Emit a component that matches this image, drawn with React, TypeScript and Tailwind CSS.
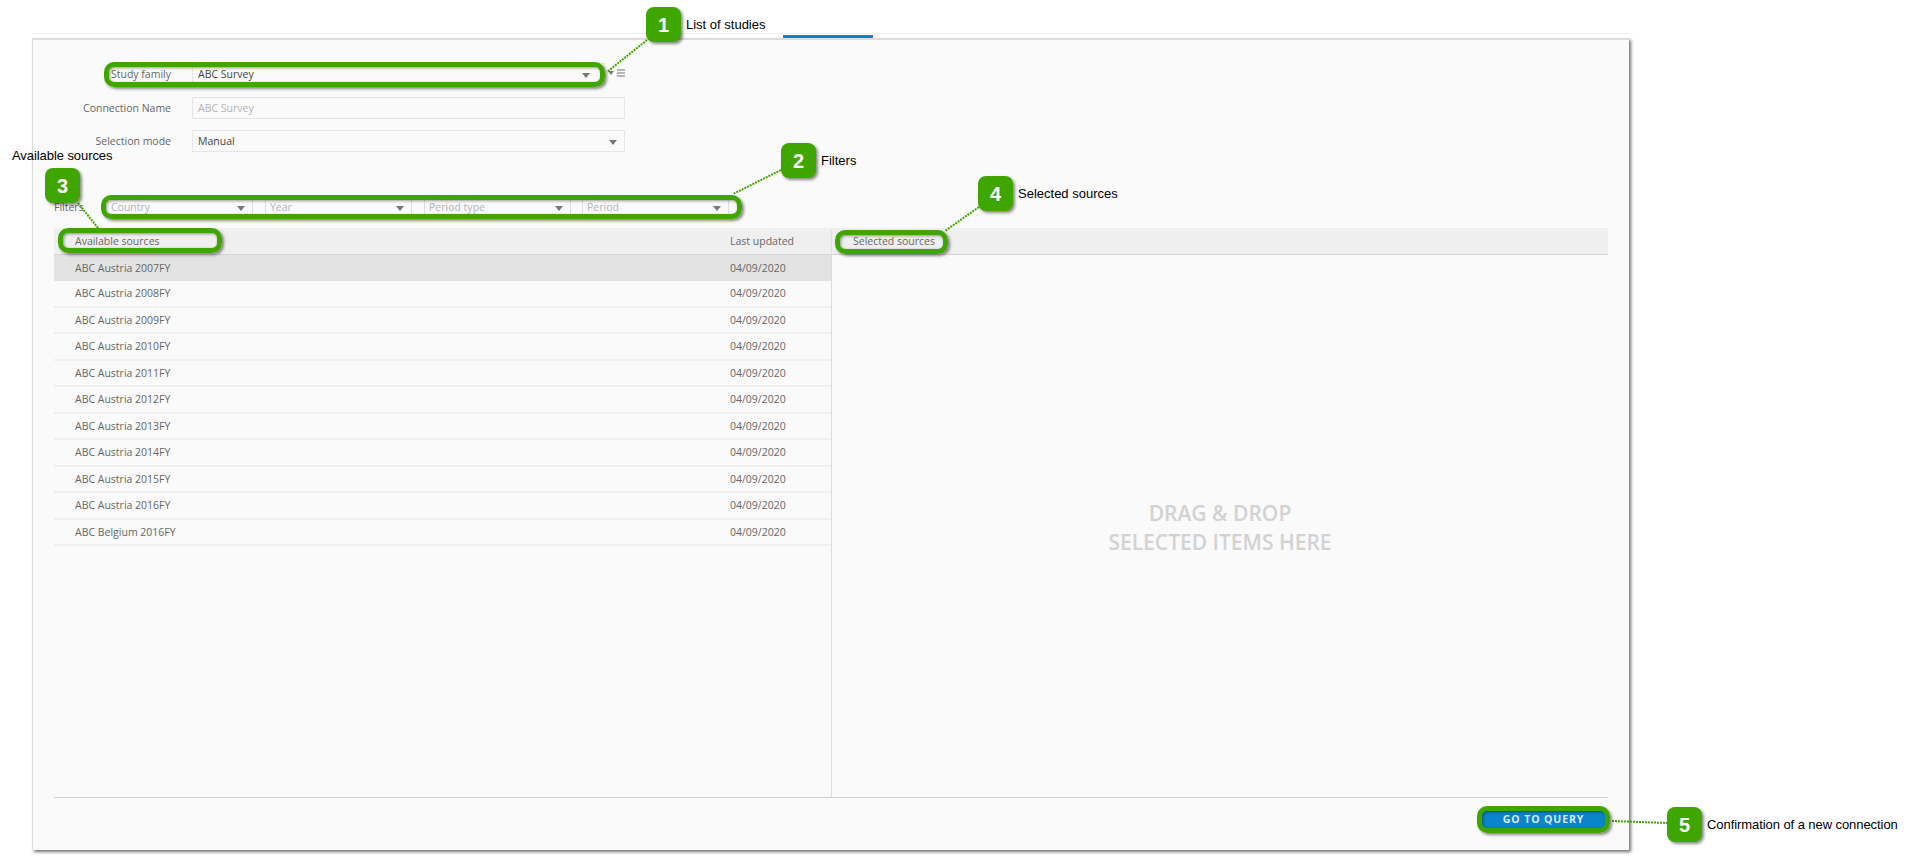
const rows = [
  "ABC Austria 2007FY",
  "ABC Austria 2008FY",
  "ABC Austria 2009FY",
  "ABC Austria 2010FY",
  "ABC Austria 2011FY",
  "ABC Austria 2012FY",
  "ABC Austria 2013FY",
  "ABC Austria 2014FY",
  "ABC Austria 2015FY",
  "ABC Austria 2016FY",
  "ABC Belgium 2016FY",
];

function Arrow({ className = "" }: { className?: string }) {
  return (
    <svg width="8" height="5" viewBox="0 0 8 5" className={className}>
      <path d="M0 0H8L4 5Z" fill="#777777" />
    </svg>
  );
}

function FilterSelect({ label, className }: { label: string; className: string }) {
  return (
    <div className={`flex h-[19px] items-center justify-between border-x border-[#dddddd] pr-[7px] text-[#b4b4b4] ${className}`}>
      <span>{label}</span>
      <Arrow />
    </div>
  );
}

function Badge({ n, className }: { n: string; className: string }) {
  return (
    <div
      className={`absolute flex h-[35px] w-[35px] items-center justify-center rounded-[8px] bg-[#3fa600] font-['Liberation_Sans',sans-serif] text-[20px] font-bold text-white shadow-[2px_2px_3px_rgba(0,0,0,0.45)] ${className}`}
    >
      {n}
    </div>
  );
}

function Note({ text, className }: { text: string; className: string }) {
  return (
    <div className={`absolute whitespace-nowrap font-['Liberation_Sans',sans-serif] text-[13px] leading-[16px] text-black ${className}`}>
      {text}
    </div>
  );
}

function Ring({ className }: { className: string }) {
  return (
    <div
      className={`absolute rounded-[10px] border-[5px] border-[#3fa600] shadow-[2px_2px_3px_rgba(0,0,0,0.45),inset_1px_1px_3px_rgba(0,0,0,0.4)] ${className}`}
    />
  );
}

export default function App() {
  return (
    <div className="relative h-[858px] w-[1914px] overflow-hidden bg-white pl-[32px] pt-[33px] font-['Open_Sans',sans-serif] text-[10.5px] text-[#666666]">
      {/* tab strip */}
      <div className="h-[5px] w-[1597px] border-t border-[#eeeeee]">
        <div className="ml-[751px] mt-[1px] h-[3px] w-[90px] bg-[#0d84cc]" />
      </div>

      {/* panel */}
      <div className="flex h-[812px] w-[1597px] flex-col border-l border-t-2 border-[#dcdcdc] bg-[#fafafa] px-[21px] shadow-[2px_2px_3px_rgba(0,0,0,0.55)]">
        {/* form */}
        <div className="flex flex-col pt-[23px]">
          <div className="flex h-[22px] items-center">
            <div className="w-[117px] pt-[2px] text-right">Study family</div>
            <div className="ml-[21px] flex h-[22px] w-[413px] items-center justify-between border border-[#e6e6e6] pl-[5px] pr-[14px] pt-[2px] text-[#444444]">
              <span>ABC Survey</span>
              <Arrow />
            </div>
            <div className="mb-[2px] ml-[3px] flex items-center gap-[3px]">
              <svg width="6" height="4" viewBox="0 0 6 4" className="mb-[1px]">
                <path d="M0 0H6L3 4Z" fill="#777777" />
              </svg>
              <svg width="8" height="8" viewBox="0 0 8 8">
                <path d="M0 1H8M0 4H8M0 7H8" stroke="#a0a0a0" strokeWidth="1.4" />
              </svg>
            </div>
          </div>

          <div className="mt-[12px] flex h-[22px] items-center">
            <div className="w-[117px] pt-[2px] text-right">Connection Name</div>
            <div className="ml-[21px] flex h-[22px] w-[433px] items-center border border-[#e6e6e6] pl-[5px] pt-[2px] text-[#b4b4b4]">
              ABC Survey
            </div>
          </div>

          <div className="mt-[11px] flex h-[22px] items-center">
            <div className="w-[117px] pt-[2px] text-right">Selection mode</div>
            <div className="ml-[21px] flex h-[22px] w-[433px] items-center justify-between border border-[#e6e6e6] pl-[5px] pr-[7px] pt-[2px] text-[#444444]">
              <span>Manual</span>
              <Arrow />
            </div>
          </div>

          <div className="mt-[45px] flex h-[22px] items-center">
            <div className="w-[51px]">Filters</div>
            <FilterSelect label="Country" className="w-[148px] pl-[5px]" />
            <FilterSelect label="Year" className="ml-[12px] w-[147px] pl-[4px]" />
            <FilterSelect label="Period type" className="ml-[12px] w-[147px] pl-[4px]" />
            <FilterSelect label="Period" className="ml-[11px] w-[147px] pl-[4px]" />
          </div>
        </div>

        {/* sources */}
        <div className="mt-[9px] flex min-h-0 flex-1 flex-col">
          <div className="flex h-[26.5px] border-b border-[#d4d4d4] bg-[#efefef] pt-[2px]">
            <div className="flex w-[777px] items-center justify-between pl-[21px]">
              <span>Available sources</span>
              <span className="w-[101px]">Last updated</span>
            </div>
            <div className="flex flex-1 items-center border-l border-[#dddddd] pl-[21px]">Selected sources</div>
          </div>

          <div className="flex min-h-0 flex-1 border-b border-[#cfcfcf]">
            <div className="w-[777px]">
              {rows.map((name, i) => (
                <div
                  key={name}
                  className={`flex h-[26.5px] items-center justify-between pl-[21px] pt-[2px] ${
                    i === 0 ? "bg-[#e3e3e3]" : "border-b-2 border-[#f0f0f0]"
                  }`}
                >
                  <span>{name}</span>
                  <span className="w-[101px]">04/09/2020</span>
                </div>
              ))}
            </div>
            <div className="flex flex-1 flex-col items-center justify-center border-l border-[#dddddd] pt-[5px] text-[21px] font-semibold leading-[29px] text-[#d2d2d2]">
              <div>DRAG &amp; DROP</div>
              <div>SELECTED ITEMS HERE</div>
            </div>
          </div>

          <div className="flex h-[52px] justify-end pt-[12px]">
            <button className="mr-[2px] h-[19px] w-[125px] bg-[#0a84cb] text-[10.5px] font-bold leading-[19px] tracking-[0.9px] text-[#dcecf7]">
              GO TO QUERY
            </button>
          </div>
        </div>
      </div>

      {/* annotation layer */}
      <svg className="absolute left-0 top-0" width="1914" height="858">
        <g stroke="#3fa600" strokeWidth="2" strokeDasharray="2 1" fill="none">
          <path d="M647 40L607 72" />
          <path d="M781 170L733 194" />
          <path d="M78 203L98 228" />
          <path d="M979 207L945 231" />
          <path d="M1612 821L1667 823" />
        </g>
      </svg>

      <Ring className="left-[104px] top-[62px] h-[25px] w-[501px]" />
      <Ring className="left-[101px] top-[195px] h-[24px] w-[641px]" />
      <Ring className="left-[58px] top-[228px] h-[25px] w-[164px]" />
      <Ring className="left-[835px] top-[230px] h-[24px] w-[113px]" />
      <Ring className="left-[1477px] top-[806px] h-[27px] w-[133px]" />

      <Badge n="1" className="left-[646px] top-[7px]" />
      <Badge n="2" className="left-[781px] top-[143px]" />
      <Badge n="3" className="left-[45px] top-[168px]" />
      <Badge n="4" className="left-[978px] top-[176px]" />
      <Badge n="5" className="left-[1667px] top-[807px]" />

      <Note text="List of studies" className="left-[686px] top-[17px]" />
      <Note text="Filters" className="left-[821px] top-[153px]" />
      <Note text="Available sources" className="left-[12px] top-[148px] tracking-[-0.07px]" />
      <Note text="Selected sources" className="left-[1018px] top-[186px]" />
      <Note text="Confirmation of a new connection" className="left-[1707px] top-[817px] tracking-[-0.07px]" />
    </div>
  );
}
